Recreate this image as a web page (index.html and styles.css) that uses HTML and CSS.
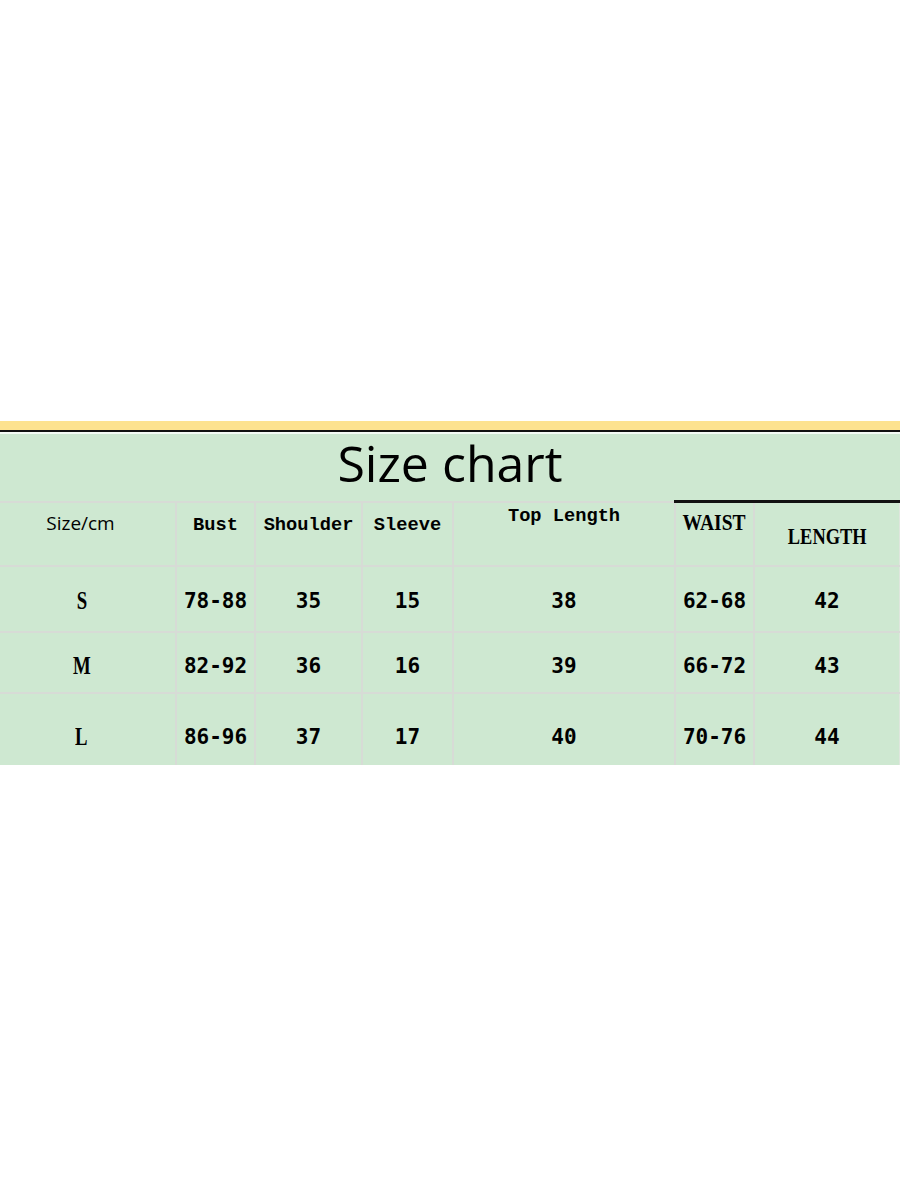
FILE: index.html
```html
<!DOCTYPE html>
<html lang="en">
<head>
<meta charset="utf-8">
<title>Size chart</title>
<link rel="stylesheet" href="styles.css">
</head>
<body>
<div class="page">
  <div class="band"></div>
  <div class="rule"></div>
  <div class="gap"></div>
  <table class="chart">
    <colgroup>
      <col class="c0"><col class="c1"><col class="c2"><col class="c3"><col class="c4"><col class="c5"><col class="c6">
    </colgroup>
    <tr class="title-row">
      <td colspan="7" class="title">Size chart</td>
    </tr>
    <tr class="head-row">
      <td class="h first"><span class="h-sans">Size/cm</span></td>
      <td class="h"><span class="h-mono p14">Bust</span></td>
      <td class="h"><span class="h-mono p14">Shoulder</span></td>
      <td class="h"><span class="h-mono p14">Sleeve</span></td>
      <td class="h"><span class="h-mono p5">Top Length</span></td>
      <td class="h dark"><span class="h-serif waist">WAIST</span></td>
      <td class="h dark last"><span class="h-serif length">LENGTH</span></td>
    </tr>
    <tr class="row rs">
      <td class="first"><span class="sz">S</span></td>
      <td>78-88</td><td>35</td><td>15</td><td>38</td><td>62-68</td><td class="last">42</td>
    </tr>
    <tr class="row rm">
      <td class="first"><span class="sz">M</span></td>
      <td>82-92</td><td>36</td><td>16</td><td>39</td><td>66-72</td><td class="last">43</td>
    </tr>
    <tr class="row rl">
      <td class="first"><span class="sz">L</span></td>
      <td>86-96</td><td>37</td><td>17</td><td>40</td><td>70-76</td><td class="last">44</td>
    </tr>
  </table>
</div>
</body>
</html>
```

FILE: styles.css
```css
html, body {
  margin: 0;
  padding: 0;
  background: #ffffff;
}
.page {
  width: 900px;
  padding-top: 421px;
}
.band {
  height: 9px;
  background: #fde28f;
}
.rule {
  height: 2px;
  background: #111111;
}
.gap {
  height: 2px;
  background: #f4fbf5;
}
.chart {
  width: 900px;
  table-layout: fixed;
  border-collapse: collapse;
  background: #cee8d1;
  color: #000;
}
.c0 { width: 176px; }
.c1 { width: 79px; }
.c2 { width: 107px; }
.c3 { width: 91px; }
.c4 { width: 222px; }
.c5 { width: 79px; }
.c6 { width: 146px; }

.chart td {
  padding: 0;
  text-align: center;
  border-left: 2px solid #d7dbd6;
  border-right: 2px solid #d7dbd6;
  border-bottom: 2px solid #d7dbd6;
}
.chart td.first { border-left: none; }
.chart td.last { border-right: 2px solid #dfe6de; }

.title-row td.title {
  height: 58px;
  padding-bottom: 8px;
  border: none;
  font-family: "Open Sans", "Noto Sans", sans-serif;
  font-size: 50px;
  line-height: 58px;
  font-weight: 400;
  text-align: center;
}

.head-row td {
  height: 62px;
  vertical-align: top;
  border-top: 2px solid #d7dbd6;
}
.head-row td.dark { border-top: 3px solid #111111; }
.head-row td.first { text-align: center; padding-right: 14px; }

.h-sans {
  display: inline-block;
  padding-top: 11px;
  font-family: "Open Sans", "Noto Sans", sans-serif;
  font-size: 19px;
  line-height: 19px;
}
.h-mono {
  display: inline-block;
  font-family: "Liberation Mono", "Courier New", monospace;
  font-weight: 700;
  font-size: 18.7px;
  line-height: 19px;
}
.p14 { padding-top: 13px; }
.p5 { padding-top: 4px; }
.h-serif {
  display: inline-block;
  font-family: "Liberation Serif", "Times New Roman", serif;
  font-weight: 700;
  font-size: 23px;
  line-height: 23px;
  transform-origin: center top;
}
.waist { padding-top: 8px; transform: scaleX(0.85); }
.length { padding-top: 22px; transform: scaleX(0.8); }

.row td {
  vertical-align: middle;
  font-family: "DejaVu Sans Mono", "Liberation Mono", monospace;
  font-weight: 700;
  font-size: 21px;
  line-height: 22px;
}
.row td.first { padding-right: 12px; }
.sz {
  font-family: "Liberation Serif", "Times New Roman", serif;
  font-weight: 700;
  font-size: 25px;
  display: inline-block;
  transform: scaleX(0.75);
}
.rs td { height: 60px; padding-top: 4px; }
.rm td { height: 52px; padding-top: 7px; }
.rl td { height: 56px; padding-top: 15px; border-bottom: none; }
```
